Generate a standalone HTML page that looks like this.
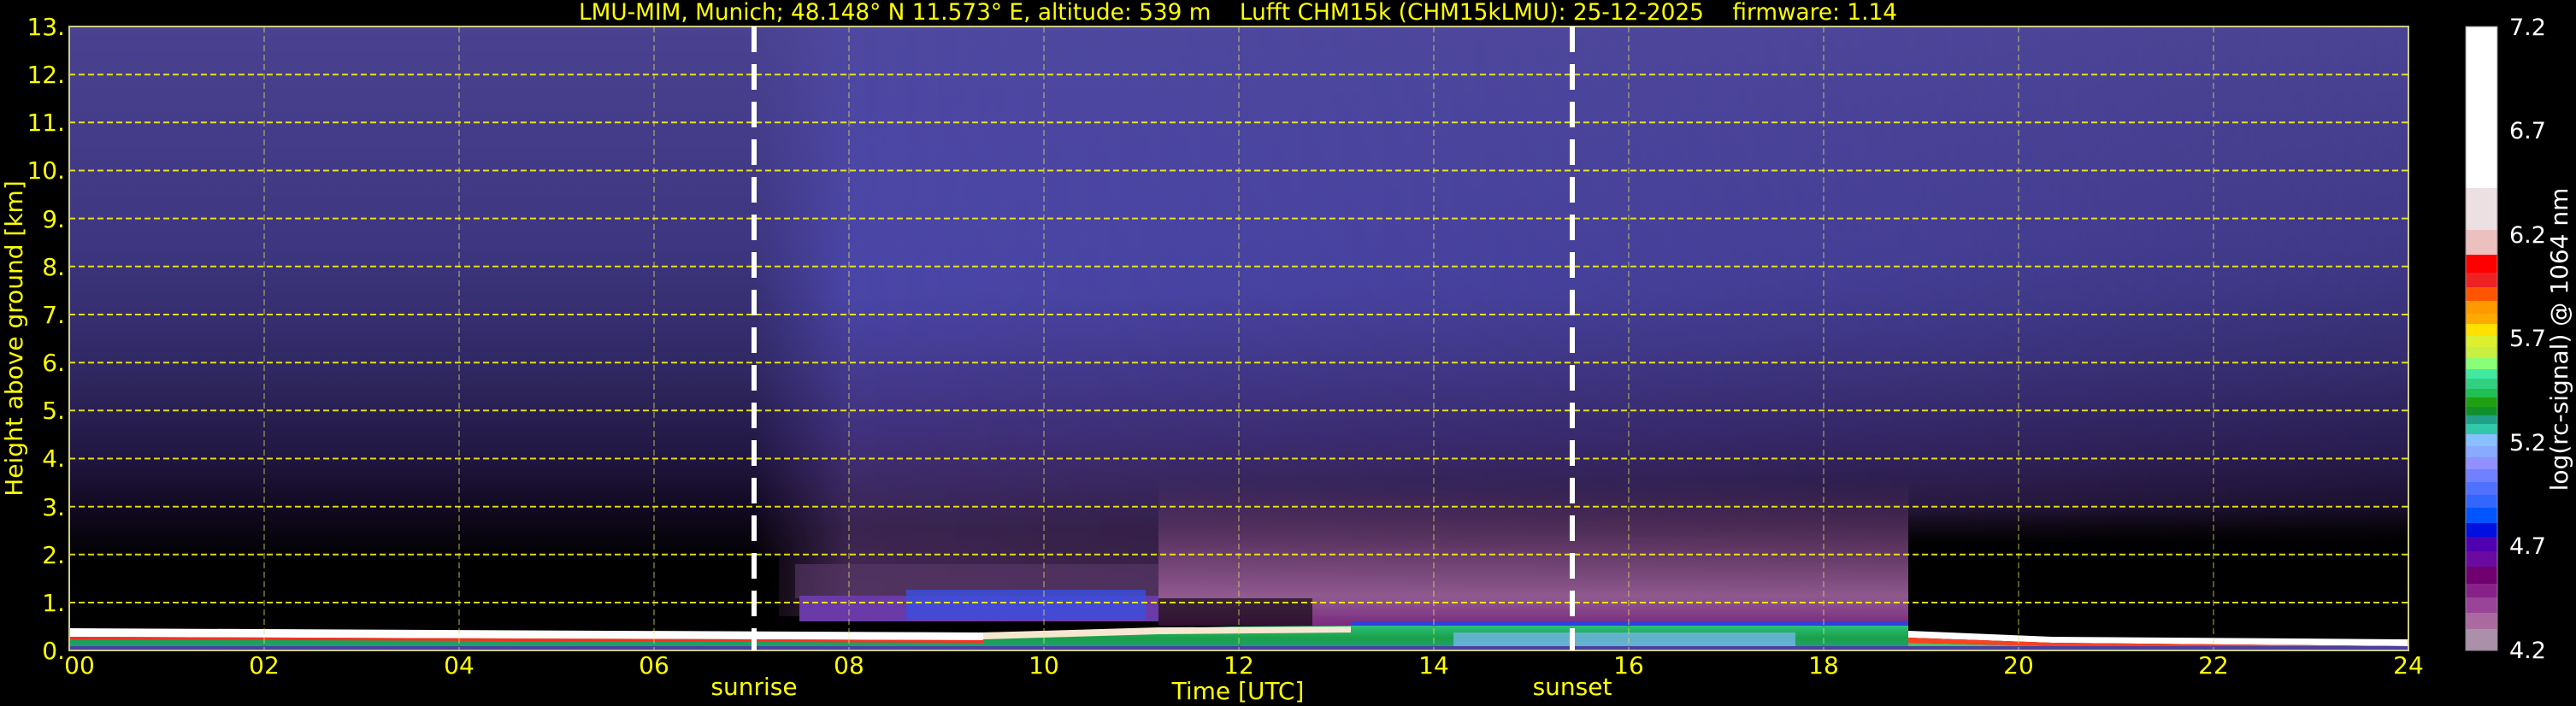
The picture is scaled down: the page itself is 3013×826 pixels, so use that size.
<!DOCTYPE html>
<html><head><meta charset="utf-8"><style>
html,body{margin:0;padding:0;background:#000;width:3013px;height:826px;overflow:hidden}
svg{display:block}
text{font-family:"DejaVu Sans","Liberation Sans",sans-serif}
</style></head><body>
<svg width="3013" height="826" viewBox="0 0 3013 826" xmlns="http://www.w3.org/2000/svg">
<defs>
<linearGradient id="bg" x1="0" y1="0" x2="0" y2="1">
<stop offset="0" stop-color="#4a4290"/>
<stop offset="0.35" stop-color="#3e3680"/>
<stop offset="0.55" stop-color="#302862"/>
<stop offset="0.68" stop-color="#221844"/>
<stop offset="0.77" stop-color="#120a22"/>
<stop offset="0.84" stop-color="#040206"/>
<stop offset="1" stop-color="#000"/>
</linearGradient>
<linearGradient id="day" x1="0" y1="0" x2="0" y2="1">
<stop offset="0" stop-color="#4e48a0"/>
<stop offset="0.45" stop-color="#4a46a8"/>
<stop offset="0.7" stop-color="#40307a"/>
<stop offset="0.85" stop-color="#3a2450"/>
<stop offset="1" stop-color="#4a2a50"/>
</linearGradient>
<linearGradient id="hx" x1="0" y1="0" x2="1" y2="0">
<stop offset="0" stop-color="#fff" stop-opacity="0"/>
<stop offset="0.06" stop-color="#fff" stop-opacity="1"/>
<stop offset="0.45" stop-color="#fff" stop-opacity="0.75"/>
<stop offset="0.7" stop-color="#fff" stop-opacity="0.55"/>
<stop offset="1" stop-color="#fff" stop-opacity="0.2"/>
</linearGradient>
<mask id="dm"><rect x="880" y="31" width="1937" height="690" fill="url(#hx)"/></mask>
<linearGradient id="pink" x1="0" y1="0" x2="0" y2="1">
<stop offset="0" stop-color="#6a3a6a" stop-opacity="0"/>
<stop offset="0.5" stop-color="#8a5088" stop-opacity="0.6"/>
<stop offset="0.8" stop-color="#9a6098" stop-opacity="0.9"/>
<stop offset="1" stop-color="#7a2a80"/>
</linearGradient>
<linearGradient id="blk" x1="0" y1="0" x2="0" y2="1">
<stop offset="0" stop-color="#000" stop-opacity="0"/>
<stop offset="0.3" stop-color="#000" stop-opacity="1"/>
<stop offset="1" stop-color="#000" stop-opacity="1"/>
</linearGradient>
<linearGradient id="gr" x1="0" y1="0" x2="0" y2="1">
<stop offset="0" stop-color="#2bbf7a"/>
<stop offset="0.5" stop-color="#1aa048"/>
<stop offset="1" stop-color="#20a088"/>
</linearGradient>
</defs>
<!-- plot background noise -->
<rect x="81" y="31" width="2736" height="730" fill="url(#bg)"/>
<rect x="880" y="31" width="1937" height="690" fill="url(#day)" mask="url(#dm)"/>
<!-- night black gap below -->
<rect x="81" y="650" width="830" height="85" fill="#000"/>
<rect x="2232" y="590" width="585" height="155" fill="url(#blk)"/>
<!-- day aerosol layer (08-11) -->
<rect x="930" y="660" width="425" height="40" fill="#5a3a6a" opacity="0.6"/>
<rect x="935" y="697" width="420" height="30" fill="#6a3aa8"/>
<rect x="1060" y="690" width="280" height="35" fill="#3a50e0" opacity="0.8"/>
<rect x="935" y="727" width="420" height="12" fill="#000"/>
<!-- afternoon pink layer -->
<rect x="1355" y="560" width="877" height="172" fill="url(#pink)"/>
<rect x="1355" y="700" width="180" height="33" fill="#000" opacity="0.6"/>
<rect x="1580" y="727" width="652" height="6" fill="#3040e0"/>
<!-- ground layers -->
<path d="M81 737 L1140 740 L1355 736 L1440 733 L1580 732 L2232 732 L2232 761 L81 761 Z" fill="url(#gr)"/>
<path d="M1700 740 L2100 740 L2100 760 L1700 760Z" fill="#80b8ff" opacity="0.7"/>
<path d="M81 735 L1150 740 L1150 749 L81 745 Z" fill="#fff"/>
<path d="M81 745 L1150 749 L1150 752 L81 748 Z" fill="#ff3020"/>
<path d="M1150 740 L1355 734 L1580 733 L1580 740 L1355 742 L1150 748 Z" fill="#f6e8d0"/>
<path d="M2232 738 L2400 745 L2817 748 L2817 756 L2400 752 L2232 746 Z" fill="#fff"/>
<path d="M2232 746 L2400 752 L2817 756 L2817 759 L2400 756 L2232 752 Z" fill="#ff4020"/>
<path d="M2232 752 L2400 756 L2817 759 L2817 761 L2232 761 Z" fill="#50c060"/>
<rect x="81" y="756" width="2736" height="5" fill="#4a40a0"/>
<!-- grid -->
<g stroke="#ffff00" stroke-width="2" stroke-dasharray="7,4" fill="none" opacity="0.85">
<path d="M81 87.2H2817M81 143.3H2817M81 199.5H2817M81 255.6H2817M81 311.8H2817M81 368H2817M81 424.2H2817M81 480.3H2817M81 536.5H2817M81 592.7H2817M81 648.8H2817M81 705H2817"/>
</g>
<g stroke="#e0e060" stroke-width="1" stroke-dasharray="7,4" fill="none" opacity="0.8">
<path d="M309 31V761M537 31V761M765 31V761M993 31V761M1221 31V761M1449 31V761M1677 31V761M1905 31V761M2133 31V761M2361 31V761M2589 31V761"/>
</g>
<rect x="81" y="31" width="2736" height="730" fill="none" stroke="#cccc88" stroke-width="2"/>
<!-- sunrise / sunset -->
<g stroke="#fff" stroke-width="6" stroke-dasharray="30,14">
<path d="M882 31V761M1839 31V761"/>
</g>
<!-- title -->
<text x="1448" y="23" fill="#ffff00" font-size="27" text-anchor="middle" textLength="1542" lengthAdjust="spacingAndGlyphs" xml:space="preserve">LMU-MIM, Munich; 48.148° N 11.573° E, altitude: 539 m    Lufft CHM15k (CHM15kLMU): 25-12-2025    firmware: 1.14</text>
<!-- y ticks -->
<g fill="#ffff00" font-size="28" text-anchor="end">
<text x="76" y="41">13.</text><text x="76" y="97">12.</text><text x="76" y="153">11.</text><text x="76" y="209">10.</text>
<text x="76" y="266">9.</text><text x="76" y="322">8.</text><text x="76" y="378">7.</text><text x="76" y="434">6.</text>
<text x="76" y="490">5.</text><text x="76" y="546">4.</text><text x="76" y="603">3.</text><text x="76" y="659">2.</text>
<text x="76" y="715">1.</text><text x="76" y="771">0.</text>
</g>
<text transform="translate(26,396) rotate(-90)" fill="#ffff00" font-size="28" text-anchor="middle">Height above ground [km]</text>
<!-- x ticks -->
<g fill="#ffff00" font-size="28" text-anchor="middle">
<text x="93" y="788">00</text><text x="309" y="788">02</text><text x="537" y="788">04</text><text x="765" y="788">06</text>
<text x="993" y="788">08</text><text x="1221" y="788">10</text><text x="1449" y="788">12</text><text x="1677" y="788">14</text>
<text x="1905" y="788">16</text><text x="2133" y="788">18</text><text x="2361" y="788">20</text><text x="2589" y="788">22</text>
<text x="2817" y="788">24</text>
<text x="882" y="813">sunrise</text><text x="1839" y="813">sunset</text>
<text x="1448" y="818">Time [UTC]</text>
</g>
<!-- colorbar -->
<g>
<rect x="2884" y="31" width="37" height="189" fill="#ffffff"/>
<rect x="2884" y="220" width="37" height="49" fill="#ece0e2"/>
<rect x="2884" y="269" width="37" height="29" fill="#edc0c0"/>
<rect x="2884" y="298" width="37" height="21" fill="#ff0000"/>
<rect x="2884" y="319" width="37" height="17" fill="#ee2222"/>
<rect x="2884" y="336" width="37" height="16" fill="#ff5500"/>
<rect x="2884" y="352" width="37" height="15" fill="#ff9900"/>
<rect x="2884" y="367" width="37" height="12" fill="#ffaa00"/>
<rect x="2884" y="379" width="37" height="14" fill="#ffe000"/>
<rect x="2884" y="393" width="37" height="13" fill="#ddf030"/>
<rect x="2884" y="406" width="37" height="13" fill="#c8f040"/>
<rect x="2884" y="419" width="37" height="13" fill="#88ff77"/>
<rect x="2884" y="432" width="37" height="11" fill="#40e8a0"/>
<rect x="2884" y="443" width="37" height="12" fill="#30d080"/>
<rect x="2884" y="455" width="37" height="10" fill="#20c050"/>
<rect x="2884" y="465" width="37" height="11" fill="#20a010"/>
<rect x="2884" y="476" width="37" height="10" fill="#119030"/>
<rect x="2884" y="486" width="37" height="10" fill="#20a088"/>
<rect x="2884" y="496" width="37" height="12" fill="#30c8a8"/>
<rect x="2884" y="508" width="37" height="14" fill="#88c0ff"/>
<rect x="2884" y="522" width="37" height="13" fill="#88aaff"/>
<rect x="2884" y="535" width="37" height="14" fill="#9090ff"/>
<rect x="2884" y="549" width="37" height="15" fill="#7080ff"/>
<rect x="2884" y="564" width="37" height="15" fill="#5070ff"/>
<rect x="2884" y="579" width="37" height="15" fill="#3366ff"/>
<rect x="2884" y="594" width="37" height="18" fill="#0055ff"/>
<rect x="2884" y="612" width="37" height="16" fill="#0010e0"/>
<rect x="2884" y="628" width="37" height="17" fill="#5000b0"/>
<rect x="2884" y="645" width="37" height="18" fill="#6a0aa0"/>
<rect x="2884" y="663" width="37" height="20" fill="#700070"/>
<rect x="2884" y="683" width="37" height="16" fill="#882288"/>
<rect x="2884" y="699" width="37" height="18" fill="#994499"/>
<rect x="2884" y="717" width="37" height="19" fill="#aa6aa0"/>
<rect x="2884" y="736" width="37" height="25" fill="#aa90a8"/>
<rect x="2884" y="31" width="37" height="730" fill="none" stroke="#888" stroke-width="1"/>
</g>
<g fill="#fff" font-size="27">
<text x="2935" y="41">7.2</text><text x="2935" y="162">6.7</text><text x="2935" y="284">6.2</text>
<text x="2935" y="405">5.7</text><text x="2935" y="527">5.2</text><text x="2935" y="648">4.7</text><text x="2935" y="770">4.2</text>
</g>
<text transform="translate(3003,397) rotate(-90)" fill="#fff" font-size="28" text-anchor="middle">log(rc-signal) @ 1064 nm</text>
</svg>
</body></html>
